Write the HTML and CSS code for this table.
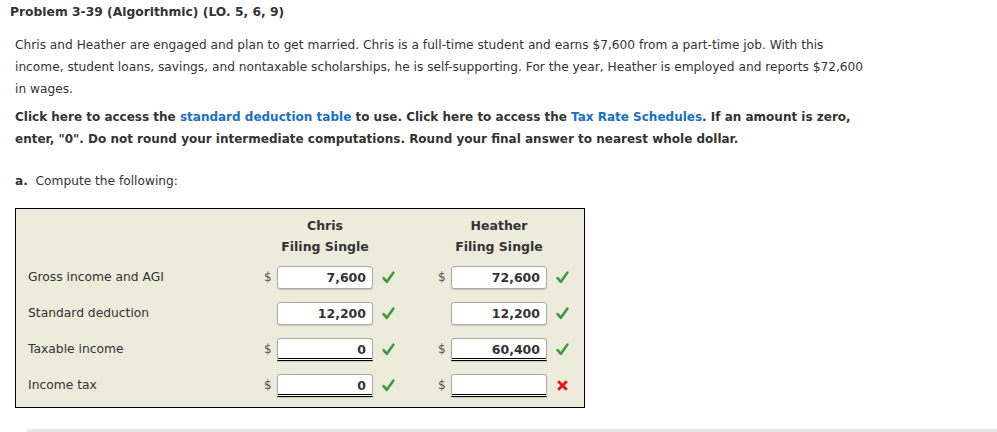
FILE: index.html
```html
<!DOCTYPE html>
<html>
<head>
<meta charset="utf-8">
<link rel="stylesheet" href="styles.css">
</head>
<body>
<div class="title">Problem 3-39 (Algorithmic) (LO. 5, 6, 9)</div>
<div class="content">
  <p class="intro">Chris and Heather are engaged and plan to get married. Chris is a full-time student and earns $7,600 from a part-time job. With this income, student loans, savings, and nontaxable scholarships, he is self-supporting. For the year, Heather is employed and reports $72,600 in wages.</p>
  <p class="instr">Click here to access the <a class="link">standard deduction table</a> to use. Click here to access the <a class="link">Tax Rate Schedules</a>. If an amount is zero, enter, "0". Do not round your intermediate computations. Round your final answer to nearest whole dollar.</p>
  <p class="part"><b>a.</b>&nbsp; Compute the following:</p>
  <div class="box">
    <div class="grid">
      <div class="head h1">Chris<br>Filing Single</div>
      <div class="head h2">Heather<br>Filing Single</div>

      <div class="label">Gross income and AGI</div>
      <div class="dol">$</div><div class="inp">7,600</div><div class="mark"><svg class="chk" viewBox="0 0 12 12"><path d="M1.5 6.5 L4.5 10 L10.5 1.5"/></svg></div>
      <div class="dol">$</div><div class="inp">72,600</div><div class="mark"><svg class="chk" viewBox="0 0 12 12"><path d="M1.5 6.5 L4.5 10 L10.5 1.5"/></svg></div>

      <div class="label">Standard deduction</div>
      <div class="dol"></div><div class="inp">12,200</div><div class="mark"><svg class="chk" viewBox="0 0 12 12"><path d="M1.5 6.5 L4.5 10 L10.5 1.5"/></svg></div>
      <div class="dol"></div><div class="inp">12,200</div><div class="mark"><svg class="chk" viewBox="0 0 12 12"><path d="M1.5 6.5 L4.5 10 L10.5 1.5"/></svg></div>

      <div class="label">Taxable income</div>
      <div class="dol">$</div><div class="inp total">0</div><div class="mark"><svg class="chk" viewBox="0 0 12 12"><path d="M1.5 6.5 L4.5 10 L10.5 1.5"/></svg></div>
      <div class="dol">$</div><div class="inp total">60,400</div><div class="mark"><svg class="chk" viewBox="0 0 12 12"><path d="M1.5 6.5 L4.5 10 L10.5 1.5"/></svg></div>

      <div class="label">Income tax</div>
      <div class="dol">$</div><div class="inp total">0</div><div class="mark"><svg class="chk" viewBox="0 0 12 12"><path d="M1.5 6.5 L4.5 10 L10.5 1.5"/></svg></div>
      <div class="dol">$</div><div class="inp total"></div><div class="mark"><svg class="xmark" viewBox="0 0 12 12"><path d="M2 2 L10 10 M10 2 L2 10"/></svg></div>
    </div>
  </div>
</div>
<div class="footer-bar"></div>
</body>
</html>
```
FILE: styles.css
```css
html, body {
  margin: 0;
  padding: 0;
  background: #fff;
}
body {
  font-family: "DejaVu Sans", Verdana, sans-serif;
  font-size: 12px;
  color: #333;
  overflow: hidden;
}
.title {
  font-weight: bold;
  font-size: 12.3px;
  line-height: 22px;
  padding: 1px 0 0 10px;
}
.content {
  padding-left: 15px;
}
p {
  margin: 0;
  line-height: 22px;
}
.intro {
  margin-top: 11px;
  width: 856px;
  font-size: 12.2px;
}
.instr {
  margin-top: 6px;
  font-weight: bold;
  width: 850px;
}
.link {
  color: #1a6fc4;
}
.part {
  margin-top: 20px;
  font-size: 12.2px;
}
.box {
  margin-top: 16px;
  width: 568px;
  height: 198px;
  border: 1px solid #000;
  background: #ecebdc;
}
.grid {
  display: grid;
  grid-template-columns: 236px 13px 96px 65px 13px 96px 30px;
  grid-template-rows: 44px 36px 36px 36px 36px;
  padding: 6px 0 0 12px;
  align-items: center;
}
.head {
  font-weight: bold;
  font-size: 12.5px;
  text-align: center;
  line-height: 21px;
  align-self: start;
}
.h1 {
  grid-column: 3;
  justify-self: center;
  white-space: nowrap;
}
.h2 {
  grid-column: 6;
  justify-self: center;
  white-space: nowrap;
}
.label {
  grid-column: 1;
  font-size: 12.3px;
}
.dol {
  font-size: 12px;
  color: #555;
  text-align: left;
}
.inp {
  height: 21px;
  line-height: 21px;
  background: #fff;
  border: 1px solid #a9a9a9;
  border-radius: 3px;
  box-shadow: 0 1px 1px rgba(0,0,0,0.15);
  text-align: right;
  padding-right: 6px;
  font-weight: bold;
  font-size: 12.5px;
  box-sizing: content-box;
  width: 88px;
}
.inp.total {
  border-bottom: 3px double #000;
  height: 19px;
  border-radius: 3px 3px 0 0;
}
.mark {
  padding-left: 9px;
  display: flex;
  align-items: center;
}
.chk, .xmark {
  width: 13px;
  height: 13px;
}
.chk path {
  fill: none;
  stroke: #3c9a3c;
  stroke-width: 2.4;
  stroke-linecap: round;
  stroke-linejoin: round;
}
.xmark path {
  fill: none;
  stroke: #ee1111;
  stroke-width: 2.6;
}
.footer-bar {
  margin: 21px 0 0 27px;
  height: 6px;
  background: #e1e7eb;
  border-radius: 3px 0 0 0;
}
```
